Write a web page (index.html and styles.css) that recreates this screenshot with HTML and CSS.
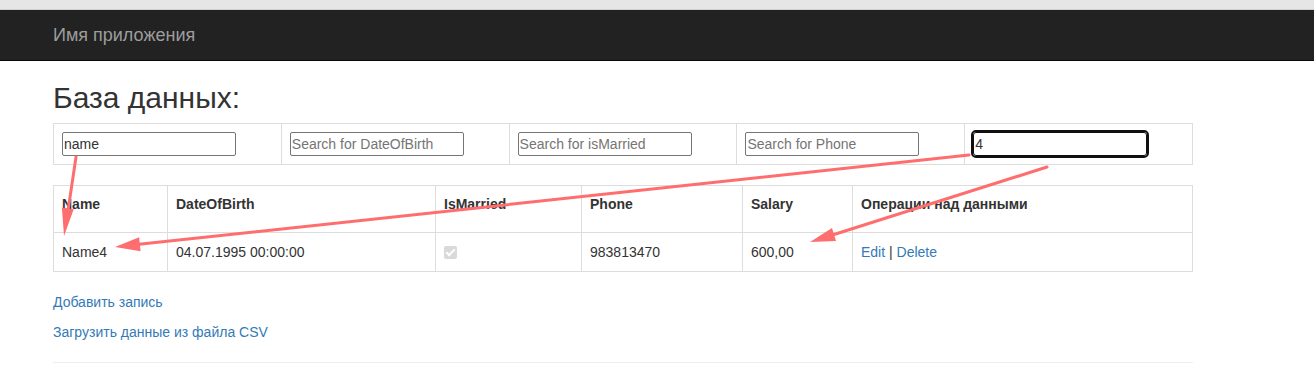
FILE: index.html
```html
<!DOCTYPE html>
<html lang="ru">
<head>
  <meta charset="UTF-8">
  <title>База данных</title>
  <link rel="stylesheet" href="styles.css">
</head>
<body>
  <div class="browser-strip"></div>

  <!-- Navbar -->
  <div class="navbar">
    <div class="container">
      <a class="navbar-brand" href="#">Имя приложения</a>
    </div>
  </div>

  <div class="container body-content">
    <h2>База данных:</h2>

    <!-- Filter row -->
    <table class="filter-table">
      <tr>
        <td><input type="text" class="search-input" value="name"></td>
        <td><input type="text" class="search-input" placeholder="Search for DateOfBirth"></td>
        <td><input type="text" class="search-input" placeholder="Search for isMarried"></td>
        <td><input type="text" class="search-input" placeholder="Search for Phone"></td>
        <td><input type="text" class="search-input is-focused" value="4"></td>
      </tr>
    </table>

    <!-- Data table -->
    <table class="data-table">
      <tr>
        <th class="col-name">Name</th>
        <th class="col-date">DateOfBirth</th>
        <th class="col-married">IsMarried</th>
        <th class="col-phone">Phone</th>
        <th class="col-salary">Salary</th>
        <th>Операции над данными</th>
      </tr>
      <tr>
        <td>Name4</td>
        <td>04.07.1995 00:00:00</td>
        <td><span class="check-box"></span></td>
        <td>983813470</td>
        <td>600,00</td>
        <td><a href="#">Edit</a> | <a href="#">Delete</a></td>
      </tr>
    </table>

    <p><a href="#">Добавить запись</a></p>
    <p><a href="#">Загрузить данные из файла CSV</a></p>
    <hr>
  </div>

  <!-- Red annotation arrows drawn over the screenshot -->
  <svg class="annotations" width="1314" height="375" viewBox="0 0 1314 375">
    <g stroke="#ff6e6e" stroke-width="3" stroke-linecap="round" fill="none">
      <line x1="76" y1="157" x2="67.8" y2="212"/>
      <line x1="969" y1="155" x2="139" y2="244.3"/>
      <line x1="1047" y1="167" x2="834" y2="234.5"/>
    </g>
    <g fill="#ff6e6e">
      <polygon points="64,236 73.7,209.2 61.9,207.4"/>
      <polygon points="115,247 140.6,251.3 139.1,237.3"/>
      <polygon points="810,242 836,241 832,228"/>
    </g>
  </svg>
</body>
</html>
```

FILE: styles.css
```css
body {
  margin: 0;
  font-family: "Liberation Sans", Arial, sans-serif;
  font-size: 14px;
  line-height: 20px;
  color: #333;
  background-color: #fff;
  position: relative;
}
a {
  color: #337ab7;
  text-decoration: none;
}
.browser-strip {
  height: 9px;
  background-color: #e6e6e6;
  border-bottom: 1px solid #d0d0d0;
}
.container {
  width: 1140px;
  margin-left: 53px;
}
.navbar {
  height: 50px;
  background-color: #222;
  border-bottom: 1px solid #080808;
}
.navbar-brand {
  display: block;
  font-size: 18px;
  line-height: 20px;
  padding: 15px 0;
  color: #9d9d9d;
}
h2 {
  font-size: 30px;
  font-weight: 500;
  line-height: 33px;
  margin: 20px 0 9px;
}
table {
  width: 100%;
  border-collapse: collapse;
}
.filter-table td {
  width: 20%;
  border: 1px solid #ddd;
  padding: 8px;
}
.search-input {
  display: block;
  box-sizing: border-box;
  width: 174px;
  height: 24px;
  margin: 0;
  padding: 1px 1px;
  border: 1px solid #767676;
  border-radius: 2px;
  font-family: "Liberation Sans", Arial, sans-serif;
  font-size: 14px;
  color: #333;
}
.search-input::placeholder {
  color: #757575;
}
.search-input.is-focused {
  outline: 2px solid #101010;
  outline-offset: 0;
  border-radius: 3px;
  border-color: #101010;
}
.data-table {
  margin-top: 20px;
}
.data-table th,
.data-table td {
  border: 1px solid #ddd;
  padding: 8px;
  text-align: left;
  vertical-align: top;
}
.data-table th {
  font-weight: bold;
  padding-bottom: 18px;
}
.data-table td {
  padding-top: 9px;
  padding-bottom: 9px;
}
.col-name { width: 97px; }
.col-date { width: 251px; }
.col-married { width: 129px; }
.col-phone { width: 144px; }
.col-salary { width: 93px; }
.check-box {
  display: inline-block;
  width: 13px;
  height: 13px;
  margin-top: 4px;
  border-radius: 2px;
  background-color: #d9d9d9;
  position: relative;
  vertical-align: top;
}
.check-box::after {
  content: "";
  position: absolute;
  left: 4px;
  top: 1px;
  width: 3px;
  height: 7px;
  border: solid #fff;
  border-width: 0 2px 2px 0;
  transform: rotate(45deg);
}
p {
  margin: 0 0 10px;
}
.data-table + p {
  margin-top: 20px;
}
hr {
  margin: 20px 0;
  border: 0;
  border-top: 1px solid #eee;
}
.annotations {
  position: absolute;
  top: 0;
  left: 0;
  pointer-events: none;
}
```
